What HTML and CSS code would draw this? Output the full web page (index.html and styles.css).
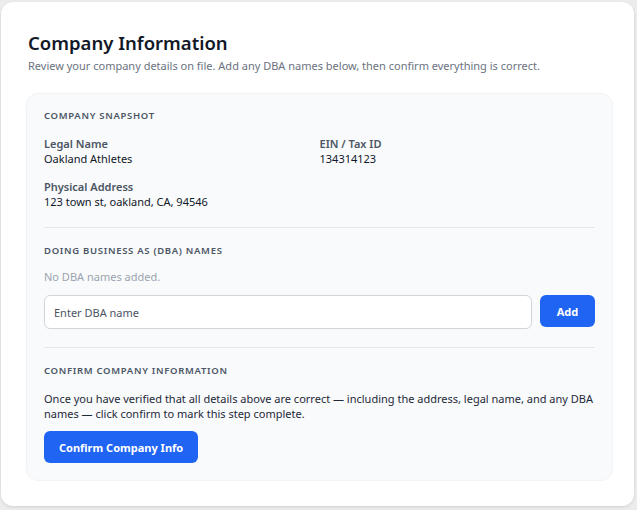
FILE: index.html
```html
<html>
  <head>
    <title>Company Information</title>
    <link rel="stylesheet" href="styles.css">
  </head>
  <body>
    <div class="card">
      <h1 class="title">Company Information</h1>
      <p class="subtitle">Review your company details on file. Add any DBA names below, then confirm everything is correct.</p>

      <div class="panel">
        <div class="section">
          <div class="section-label">Company Snapshot</div>
          <div class="fields">
            <div class="field">
              <div class="field-label">Legal Name</div>
              <div class="field-value">Oakland Athletes</div>
            </div>
            <div class="field">
              <div class="field-label">EIN / Tax ID</div>
              <div class="field-value">134314123</div>
            </div>
            <div class="field">
              <div class="field-label">Physical Address</div>
              <div class="field-value">123 town st, oakland, CA, 94546</div>
            </div>
          </div>
        </div>

        <div class="section">
          <div class="section-label">Doing Business As (DBA) Names</div>
          <div class="empty">No DBA names added.</div>
          <div class="dba-row">
            <input class="dba-input" type="text" placeholder="Enter DBA name">
            <button class="button add">Add</button>
          </div>
        </div>

        <div class="section">
          <div class="section-label">Confirm Company Information</div>
          <p class="confirm-text">Once you have verified that all details above are correct — including the address, legal name, and any DBA names — click confirm to mark this step complete.</p>
          <button class="button confirm">Confirm Company Info</button>
        </div>
      </div>
    </div>
  </body>
</html>
```

FILE: styles.css
```css
/* General Styling */
body {
  margin: 0;
  background-color: #ececec;
  font-family: "Noto Sans", "Open Sans", sans-serif;
  color: #111827;
}

.card {
  margin: 2px 3px 4px 1px;
  height: 504px;
  box-sizing: border-box;
  padding: 27px 21px 0 25px;
  background-color: white;
  border-radius: 12px;
  box-shadow: 0 1px 3px rgba(0, 0, 0, 0.12);
}

.title {
  margin: 0 0 0 2px;
  font-size: 18.5px;
  line-height: 28px;
  font-weight: 600;
  color: #111827;
}

.subtitle {
  margin: 0 0 18px 2px;
  font-size: 11px;
  line-height: 18px;
  color: #6b7280;
}

/* Panel */
.panel {
  background-color: #f8fafc;
  border: 1px solid #f1f3f6;
  border-radius: 12px;
  padding: 14px 17px 17px 17px;
}

.section {
  padding: 0 0 17px 0;
  border-bottom: 1px solid #e5e7eb;
  margin-bottom: 15px;
}

.section:last-child {
  border-bottom: none;
  margin-bottom: 0;
  padding-bottom: 0;
}

.section-label {
  font-size: 9.5px;
  line-height: 16px;
  font-weight: 600;
  letter-spacing: 0.7px;
  text-transform: uppercase;
  color: #4b5563;
  margin-bottom: 12px;
}

.fields {
  display: grid;
  grid-template-columns: 1fr 1fr;
  row-gap: 12px;
}

.field-label {
  font-size: 11px;
  line-height: 15px;
  font-weight: 600;
  color: #4b5563;
}

.field-value {
  font-size: 11px;
  line-height: 16px;
  color: #111827;
}

.empty {
  margin: -2px 0 10px 0;
  font-size: 11px;
  line-height: 16px;
  color: #9ca3af;
}

.dba-row {
  display: flex;
  gap: 8px;
  align-items: flex-start;
  margin-bottom: 1px;
}

.dba-input {
  flex: 1;
  height: 34px;
  box-sizing: border-box;
  padding: 0 9px;
  font-family: inherit;
  font-size: 11px;
  color: #111827;
  background-color: white;
  border: 1px solid #d1d5db;
  border-radius: 6px;
}

.dba-input::placeholder {
  color: #4b5563;
}

.button {
  height: 32px;
  font-family: inherit;
  font-size: 11px;
  font-weight: 700;
  color: white;
  background-color: #1f64f2;
  border: none;
  border-radius: 6px;
  cursor: pointer;
}

.add {
  width: 55px;
}

.confirm {
  padding: 0 15px;
}

.confirm-text {
  margin: 0 0 10px 0;
  font-size: 11px;
  line-height: 15px;
  color: #1f2937;
}
```
